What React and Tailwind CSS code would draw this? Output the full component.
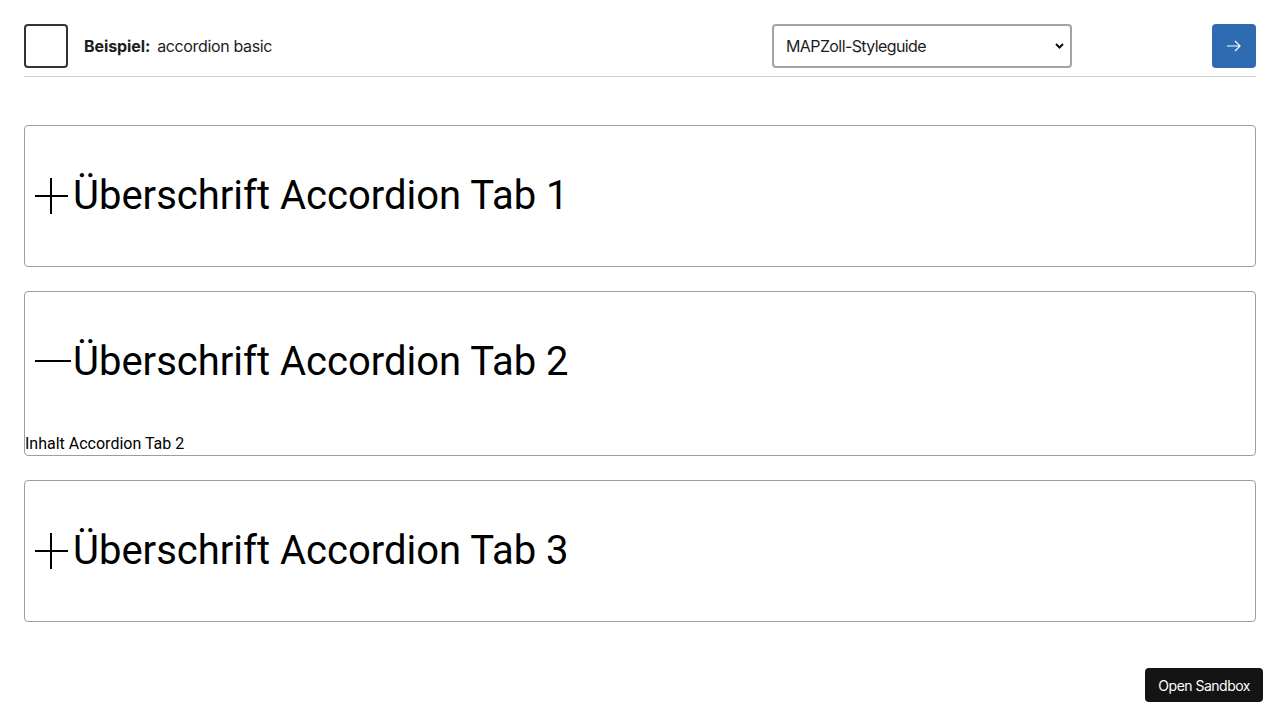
import { useState } from 'react';

const tabs = [
  { id: 1, title: 'Überschrift Accordion Tab 1', content: 'Inhalt Accordion Tab 1' },
  { id: 2, title: 'Überschrift Accordion Tab 2', content: 'Inhalt Accordion Tab 2' },
  { id: 3, title: 'Überschrift Accordion Tab 3', content: 'Inhalt Accordion Tab 3' },
];

function PlusIcon() {
  return (
    <svg width="34" height="36" viewBox="0 0 34 36" fill="none" stroke="#000" strokeWidth="2">
      <path d="M16 0v36M0 18h33" />
    </svg>
  );
}

function MinusIcon() {
  return (
    <svg width="36" height="36" viewBox="0 0 36 36" fill="none" stroke="#000" strokeWidth="2">
      <path d="M0 17h36" />
    </svg>
  );
}

function AccordionTab({ tab, open, onToggle }) {
  return (
    <div className="border border-[#9e9e9e] rounded-[4px]">
      <button
        type="button"
        onClick={onToggle}
        className="w-full h-[140px] flex items-center pl-[10px] text-left"
      >
        <span className="w-[38px] flex items-center shrink-0">
          {open ? <MinusIcon /> : <PlusIcon />}
        </span>
        <span className="text-[40px] text-black font-['Roboto',sans-serif]">{tab.title}</span>
      </button>
      {open && (
        <div className="text-[16px] leading-[23px] text-black font-['Roboto',sans-serif]">
          {tab.content}
        </div>
      )}
    </div>
  );
}

export default function App() {
  const [openId, setOpenId] = useState(2);

  return (
    <div className="min-h-screen bg-white font-['Inter',sans-serif] text-[#1d1d1f]">
      {/* Kopfzeile */}
      <div className="mx-6 pt-6 pb-2 border-b border-[#cfcfcf] flex items-center">
        <div className="w-11 h-11 border-2 border-[#333] rounded-[4px]" />
        <div className="ml-4 text-[16px]">
          <span className="font-bold tracking-[-0.1px]">Beispiel:</span>
          <span className="ml-[7px] tracking-[-0.35px]">accordion basic</span>
        </div>
        <div className="ml-auto relative w-[300px] h-11">
          <select
            defaultValue="mapzoll"
            className="appearance-none w-full h-full border-2 border-[#a3a3a3] rounded-[4px] pl-3 pr-8 text-[16px] tracking-[-0.6px] text-[#1d1d1f] bg-white"
          >
            <option value="mapzoll">MAPZoll-Styleguide</option>
          </select>
          <svg className="absolute right-[8px] top-[19px] pointer-events-none" width="9" height="6" viewBox="0 0 9 6" fill="none" stroke="#111" strokeWidth="2">
            <path d="M1 1l3.5 3.5L8 1" />
          </svg>
        </div>
        <button type="button" className="ml-[140px] w-11 h-11 rounded-[4px] bg-[#2f6bb1] flex items-center justify-center">
          <svg width="14" height="12" viewBox="0 0 14 12" fill="none" stroke="#fff" strokeWidth="1.2">
            <path d="M0 6h13M8 1l5 5-5 5" />
          </svg>
        </button>
      </div>

      {/* Accordion */}
      <div className="mx-6 mt-12 flex flex-col gap-6">
        {tabs.map((tab) => (
          <AccordionTab
            key={tab.id}
            tab={tab}
            open={openId === tab.id}
            onToggle={() => setOpenId(openId === tab.id ? null : tab.id)}
          />
        ))}
      </div>

      <button
        type="button"
        className="fixed right-[17px] bottom-[18px] h-[34px] px-[13px] rounded-[4px] bg-[#141414] text-white text-[14px] tracking-[-0.5px]"
      >
        Open Sandbox
      </button>
    </div>
  );
}
